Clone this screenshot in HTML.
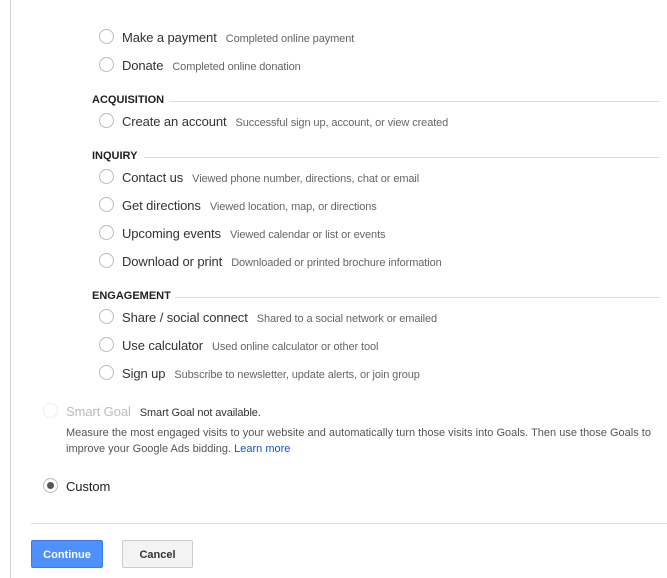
<!DOCTYPE html>
<html><head><meta charset="utf-8"><style>
body{margin:0;width:667px;height:578px;background:#fff;font-family:"Liberation Sans",Arial,sans-serif;position:relative;overflow:hidden}
.vl{position:absolute;left:10px;top:0;width:1px;height:578px;background:#d0d0d0}
.row{position:absolute;left:99px;height:18px;line-height:18px;white-space:nowrap}
.r{display:inline-block;width:13px;height:13px;border:1px solid #bbb;border-radius:50%;vertical-align:middle;margin-right:8px;position:relative;top:-1px}
.l{font-size:13px;color:#333;letter-spacing:-0.1px}
.d{font-size:11px;color:#666;margin-left:9px;letter-spacing:-0.1px}
.h{position:absolute;left:92px;height:14px;line-height:14px;font-size:11px;font-weight:bold;color:#222;white-space:nowrap}
.hl{position:absolute;height:1px;background:#ddd;right:7px}
.p{position:absolute;left:66px;font-size:11px;color:#555;line-height:16px;width:600px}
a{color:#15c;text-decoration:none}
.btn{position:absolute;top:540px;height:28px;line-height:28px;width:71px;text-align:center;font-size:11px;font-weight:bold;border-radius:2px;box-sizing:border-box}
</style></head><body>
<div class="vl"></div>
<div class="row" style="top:29px"><span class="r"></span><span class="l">Make a payment</span><span class="d">Completed online payment</span></div>
<div class="row" style="top:57px"><span class="r"></span><span class="l">Donate</span><span class="d">Completed online donation</span></div>
<div class="h" style="top:93px">ACQUISITION</div><div class="hl" style="left:169px;top:101px"></div>
<div class="row" style="top:113px"><span class="r"></span><span class="l">Create an account</span><span class="d">Successful sign up, account, or view created</span></div>
<div class="h" style="top:149px">INQUIRY</div><div class="hl" style="left:144px;top:157px"></div>
<div class="row" style="top:169px"><span class="r"></span><span class="l">Contact us</span><span class="d">Viewed phone number, directions, chat or email</span></div>
<div class="row" style="top:197px"><span class="r"></span><span class="l">Get directions</span><span class="d">Viewed location, map, or directions</span></div>
<div class="row" style="top:225px"><span class="r"></span><span class="l">Upcoming events</span><span class="d">Viewed calendar or list or events</span></div>
<div class="row" style="top:253px"><span class="r"></span><span class="l">Download or print</span><span class="d">Downloaded or printed brochure information</span></div>
<div class="h" style="top:289px">ENGAGEMENT</div><div class="hl" style="left:175px;top:297px"></div>
<div class="row" style="top:309px"><span class="r"></span><span class="l">Share / social connect</span><span class="d">Shared to a social network or emailed</span></div>
<div class="row" style="top:337px"><span class="r"></span><span class="l">Use calculator</span><span class="d">Used online calculator or other tool</span></div>
<div class="row" style="top:365px"><span class="r"></span><span class="l">Sign up</span><span class="d">Subscribe to newsletter, update alerts, or join group</span></div>
<div class="row" style="left:43px;top:403px"><span class="r" style="border-color:#eee"></span><span class="l" style="color:#bbb">Smart Goal</span><span class="d" style="color:#333">Smart Goal not available.</span></div>
<div class="p" style="top:425px">Measure the most engaged visits to your website and automatically turn those visits into Goals. Then use those Goals to<br>improve your Google Ads bidding. <a>Learn more</a></div>
<div class="row" style="left:43px;top:478px"><span class="r" style="border-color:#bbb"><span style="position:absolute;left:3px;top:3px;width:7px;height:7px;border-radius:50%;background:#555"></span></span><span class="l" style="color:#222">Custom</span></div>
<div style="position:absolute;left:31px;right:0;top:523px;height:1px;background:#ddd"></div>
<div class="btn" style="left:31px;width:72px;background:#4d90fe;border:1px solid #3b7be8;color:#fff">Continue</div>
<div class="btn" style="left:122px;background:#f3f3f3;border:1px solid #ccc;color:#333">Cancel</div>
</body></html>
